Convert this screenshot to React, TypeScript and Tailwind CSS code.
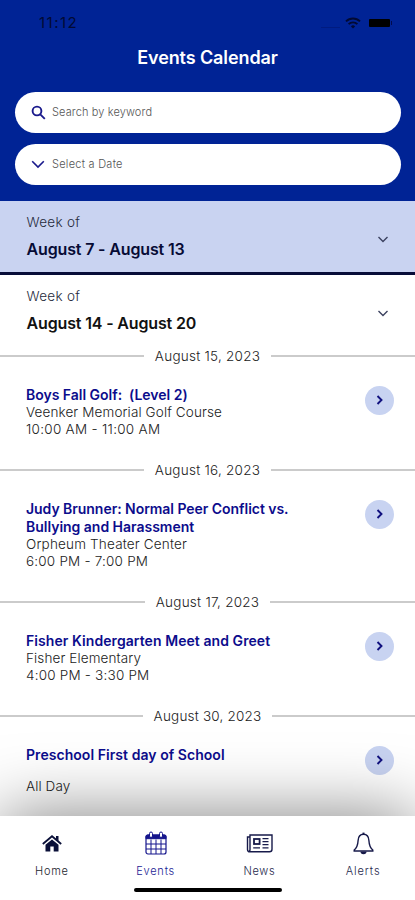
import React from "react";

type EventItem = {
  date: string;
  dateClass: string;
  title: { text: string; cls: string }[];
  details: { text: string; cls: string }[];
  gap?: boolean;
};

const events: EventItem[] = [
  {
    date: "August 15, 2023",
    dateClass: "tracking-[0.25px]",
    title: [{ text: "Boys Fall Golf:\u00a0 (Level 2)", cls: "tracking-[-0.02px]" }],
    details: [
      { text: "Veenker Memorial Golf Course", cls: "tracking-[0.12px]" },
      { text: "10:00 AM - 11:00 AM", cls: "tracking-[0.28px]" },
    ],
  },
  {
    date: "August 16, 2023",
    dateClass: "tracking-[0.25px]",
    title: [
      { text: "Judy Brunner: Normal Peer Conflict vs.", cls: "tracking-[-0.04px]" },
      { text: "Bullying and Harassment", cls: "tracking-[-0.02px]" },
    ],
    details: [
      { text: "Orpheum Theater Center", cls: "tracking-[0.18px]" },
      { text: "6:00 PM - 7:00 PM", cls: "tracking-[0.2px]" },
    ],
  },
  {
    date: "August 17, 2023",
    dateClass: "tracking-[0.25px]",
    title: [{ text: "Fisher Kindergarten Meet and Greet", cls: "tracking-[0.07px]" }],
    details: [
      { text: "Fisher Elementary", cls: "tracking-[0.12px]" },
      { text: "4:00 PM - 3:30 PM", cls: "tracking-[0.2px]" },
    ],
  },
  {
    date: "August 30, 2023",
    dateClass: "tracking-[0.2px]",
    title: [{ text: "Preschool First day of School", cls: "tracking-[0.05px]" }],
    details: [{ text: "All Day", cls: "tracking-[0.1px]" }],
    gap: true,
  },
];

function StatusBar() {
  return (
    <div className="flex h-[46px] items-center justify-between pl-[39px] pr-[23px] text-[#020a33]">
      <span className="text-[15px] leading-5 tracking-[1.5px]">11:12</span>
      <div className="flex items-center">
        <div className="mr-[5px] mt-2 h-px w-[19px] bg-[#001b80]" />
        <svg width="16" height="12" viewBox="0 0 16 12" fill="none" stroke="currentColor" strokeWidth="1.900">
          <path d="M1 4.4a10 10 0 0 1 14 0" />
          <path d="M3.6 7.2a6.2 6.2 0 0 1 8.800 0" />
          <path d="M8 11.600 5.900 9.400a3 3 0 0 1 4.200 0Z" fill="currentColor" stroke="none" />
        </svg>
        <div className="ml-[8px] h-[8px] w-[21px] rounded-[1px] bg-black" />
        <div className="ml-px h-[4px] w-px bg-[#020a4d]" />
      </div>
    </div>
  );
}

function Week({ range, cls }: { range: string; cls: string }) {
  return (
    <div className="flex items-center justify-between pl-[26.500px] pr-[27px]">
      <div>
        <div className="text-[13.500px] font-light leading-[18px] tracking-[0.3px] text-[#262b3c]">Week of</div>
        <div className={"mt-[8px] text-[16px] font-semibold leading-[20px] " + cls}>{range}</div>
      </div>
      <svg width="10" height="7" viewBox="0 0 10 7" fill="none" stroke="#3c4260" strokeWidth="1.4" className="mt-[6px]">
        <path d="m.5 1 4.500 4.500L9.500 1" />
      </svg>
    </div>
  );
}

function EventRow({ e }: { e: EventItem }) {
  return (
    <section>
      <div className="flex h-[20px] items-center">
        <div className="h-[1.500px] flex-1 bg-[#cbcbcb]" />
        <div className={"px-[10.500px] pb-px text-[13.500px] font-light leading-5 text-[#222] " + e.dateClass}>{e.date}</div>
        <div className="h-[1.500px] flex-1 bg-[#cbcbcb]" />
      </div>
      <div className="flex items-start justify-between pb-[22px] pl-[26px] pr-[21px] pt-[20px]">
        <div>
          {e.title.map((t) => (
            <div key={t.text} className={"whitespace-nowrap text-[14px] font-semibold leading-[18px] text-[#0c0c8c] " + t.cls}>
              {t.text}
            </div>
          ))}
          {e.gap && <div className="h-[14px]" />}
          {e.details.map((t) => (
            <div key={t.text} className={"whitespace-nowrap text-[13.500px] font-light leading-[17px] text-[#222] " + t.cls}>
              {t.text}
            </div>
          ))}
        </div>
        <div className="-mt-[0.500px] flex size-[29px] items-center justify-center rounded-full bg-[#c8d3f1]">
          <svg width="8" height="10" viewBox="0 0 8 10" fill="none" stroke="#10107e" strokeWidth="1.900">
            <path d="m1.500 1 4 4-4 4" />
          </svg>
        </div>
      </div>
    </section>
  );
}

function HomeIcon() {
  return (
    <svg width="20" height="17" viewBox="0 0 20 17" fill="#0a1038">
      <path d="M14 1h2.500v5L14 3.800Z" />
      <path d="m.8 9 9.200-7.800L19.200 9" fill="none" stroke="#0a1038" strokeWidth="1.800" />
      <path d="m10 4.400 6.500 5.400V16.500H11.700V11.500H8.300v5H3.500V9.800Z" />
    </svg>
  );
}

function CalendarIcon() {
  return (
    <svg width="22" height="24" viewBox="0 0 22 24" fill="none" stroke="#14148c">
      <rect x="1" y="4" width="20" height="19" rx="2" strokeWidth="1.200" />
      <path d="M1 7.700V5.500Q1 4 2.500 4H19.500Q21 4 21 5.500V7.700Z" fill="#14148c" />
      <path d="M1 13h20M1 18h20M6 8.500V23M11 8.500V23M16 8.500V23" strokeWidth="1" />
      <rect x="4.500" y="1" width="3" height="5.500" rx="1.500" fill="#fff" />
      <rect x="14.500" y="1" width="3" height="5.500" rx="1.500" fill="#fff" />
    </svg>
  );
}

function NewsIcon() {
  return (
    <svg width="27" height="19" viewBox="0 0 27 19" fill="none" stroke="#171a4a" strokeWidth="1.400">
      <path d="M4 3H1.500v12.500q0 2.300 2.300 2.300H23.500q2.500 0 2.500-2.500V1H4v14.500q0 2.300-1.800 2.200" />
      <rect x="8" y="5" width="5.600" height="5" strokeWidth="1.800" />
      <path d="M16.500 4.600h6M16.500 7.600h6M16.500 10.600h6M7.200 13.800h6.800M16.500 13.800h6" strokeWidth="1.200" />
    </svg>
  );
}

function BellIcon() {
  return (
    <svg width="21" height="23" viewBox="0 0 21 23" fill="none" stroke="#171a4a" strokeWidth="1.400">
      <path d="M10.500 2.300c-3.800 0-5.200 2.800-5.400 6.200C4.800 13.700 3.700 16 1.200 18v1h18.600v-1c-2.500-2-3.600-4.300-3.900-9.500-.2-3.400-1.600-6.200-5.400-6.200Z" />
      <path d="M10.500.6v2" strokeWidth="2" />
      <path d="M7.500 19.500h6a3 2.700 0 0 1-6 0Z" fill="#171a4a" stroke="none" />
    </svg>
  );
}

const tabs = [
  { label: "Home", Icon: HomeIcon, cls: "tracking-[0.8px] text-[#22242e]" },
  { label: "Events", Icon: CalendarIcon, cls: "tracking-[0.8px] text-[#1c1c94]" },
  { label: "News", Icon: NewsIcon, cls: "tracking-[0.7px] text-[#25284c]" },
  { label: "Alerts", Icon: BellIcon, cls: "tracking-[0.9px] text-[#25284c]" },
];

export default function App() {
  return (
    <div className="flex h-[900px] w-[415px] flex-col overflow-hidden bg-white font-['Inter','Liberation_Sans',sans-serif]">
      <header className="h-[201px] shrink-0 bg-[#002395]">
        <StatusBar />
        <h1 className="pt-px text-center text-[18px] font-semibold leading-[22px] tracking-[-0.1px] text-white">Events Calendar</h1>
        <div className="mt-[23px] flex flex-col gap-[11px] pl-[15px] pr-[14px]">
          <div className="flex h-[41px] items-center rounded-full bg-white pl-[16px] text-[11px] font-light tracking-[0.12px] text-[#555]">
            <svg width="15" height="15" viewBox="0 0 15 15" fill="none" stroke="#1a1a8c" strokeWidth="1.900" className="mr-[6px]">
              <circle cx="6" cy="6" r="4.400" />
              <path d="m9.300 9.300 4.500 4.500" />
            </svg>
            Search by keyword
          </div>
          <div className="flex h-[41px] items-center rounded-full bg-white pl-[16px] text-[11px] font-light tracking-[0.25px] text-[#555]">
            <svg width="14" height="9" viewBox="0 0 14 9" fill="none" stroke="#1a1a8c" strokeWidth="1.600" className="mr-[7px]">
              <path d="m1.200 1.200 5.800 5.800 5.800-5.800" />
            </svg>
            Select a Date
          </div>
        </div>
      </header>
      <div className="h-[74px] shrink-0 border-b-[3px] border-[#080d38] bg-[#c9d3f1] pt-[12px] text-[#070b35]">
        <Week range="August 7 - August 13" cls="tracking-[-0.15px]" />
      </div>
      <main className="min-h-0 flex-1 overflow-hidden">
        <div className="h-[71px] pt-[12px] text-[#111]">
          <Week range="August 14 - August 20" cls="tracking-[-0.15px]" />
        </div>
        {events.map((e) => (
          <EventRow key={e.date} e={e} />
        ))}
      </main>
      <nav className="relative h-[84.500px] shrink-0 bg-white shadow-[0_0_70px_rgba(0,0,0,0.5)]">
        <div className="grid h-[72px] grid-cols-4">
          {tabs.map(({ label, Icon, cls }) => (
            <div key={label} className="flex flex-col items-center">
              <div className="mt-[14.500px] flex h-[26px] items-center">
                <Icon />
              </div>
              <span className={"mt-[7px] text-[11px] font-light leading-4 " + cls}>{label}</span>
            </div>
          ))}
        </div>
        <div className="mx-auto h-[4px] w-[148px] rounded-full bg-black" />
      </nav>
    </div>
  );
}
